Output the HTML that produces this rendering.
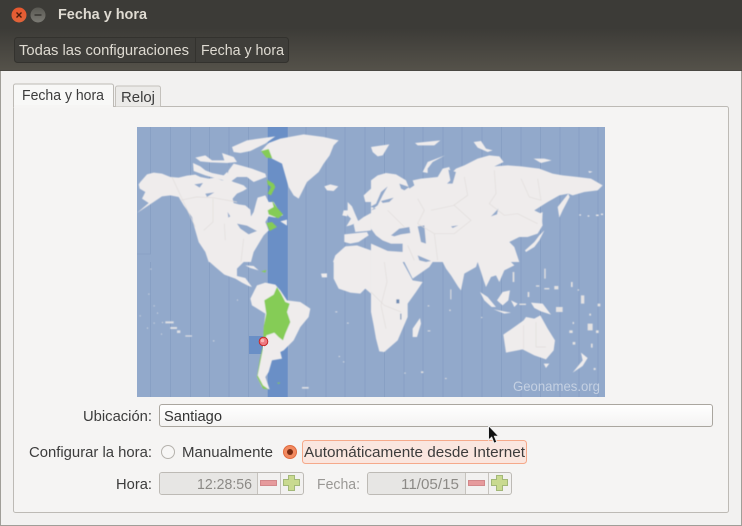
<!DOCTYPE html>
<html><head><meta charset="utf-8"><style>
html,body{margin:0;padding:0;width:742px;height:526px;overflow:hidden;background:#f2f1f0}
svg{display:block}
text{font-family:"Liberation Sans",sans-serif;font-size:14.5px;fill:#3c3c3c}
.land{fill:#efecec}
.b{stroke:#e0dcda;stroke-width:2;fill:none}
.w{fill:#92a9cb}
.g{fill:#85cc56}
</style></head><body>
<svg width="742" height="526" viewBox="0 0 742 526" xmlns="http://www.w3.org/2000/svg">
<defs>
<linearGradient id="tb" x1="0" y1="0" x2="0" y2="1"><stop offset="0" stop-color="#3c3b37"/><stop offset=".4" stop-color="#3c3b37"/><stop offset="1" stop-color="#55524a"/></linearGradient>
<linearGradient id="cl" x1="0" y1="0" x2="0" y2="1"><stop offset="0" stop-color="#e8572e"/><stop offset="1" stop-color="#e0643a"/></linearGradient>
<linearGradient id="mn" x1="0" y1="0" x2="0" y2="1"><stop offset="0" stop-color="#5a5953"/><stop offset="1" stop-color="#7b7a74"/></linearGradient>
<linearGradient id="en" x1="0" y1="0" x2="0" y2="1"><stop offset="0" stop-color="#fff"/><stop offset="1" stop-color="#f4f3f2"/></linearGradient>
<filter id="bl" x="-2%" y="-2%" width="104%" height="104%"><feGaussianBlur stdDeviation=".4"/></filter>
</defs>

<rect width="742" height="526" fill="#f2f1f0"/>
<rect width="742" height="71" fill="url(#tb)"/>
<rect x="0" y="70" width="742" height="1" fill="#4a4842"/>
<rect x="0" y="71" width="1" height="455" fill="#a09e98"/>
<rect x="741" y="71" width="1" height="455" fill="#a09e98"/>
<rect x="0" y="525" width="742" height="1" fill="#a09e98"/>

<circle cx="19" cy="15" r="7.500" fill="url(#cl)"/>
<path d="M16.500 12.500l5 5M21.500 12.500l-5 5" stroke="#4a1c0c" stroke-width="1.400"/>
<circle cx="38" cy="15" r="7.500" fill="url(#mn)"/>
<path d="M34.500 15h7" stroke="#33322e" stroke-width="1.400"/>
<text x="58" y="19" textLength="89" lengthAdjust="spacingAndGlyphs" style="fill:#dfdbd2;font-weight:bold">Fecha y hora</text>

<rect x="14.500" y="37.500" width="274" height="25" rx="3" fill="#3f3e3a" stroke="#33322e"/>
<rect x="195" y="38" width="1" height="24" fill="#33322e"/>
<text x="19" y="55" textLength="170" lengthAdjust="spacingAndGlyphs" style="fill:#dfdbd2">Todas las configuraciones</text>
<text x="201" y="55" textLength="83" lengthAdjust="spacingAndGlyphs" style="fill:#dfdbd2">Fecha y hora</text>

<!-- notebook -->
<rect x="13.500" y="106.500" width="715" height="406" rx="2" fill="#f5f4f3" stroke="#bdbab5"/>
<path d="M115.500 106.500V88a2 2 0 0 1 2-2H158.500a2 2 0 0 1 2 2V106.500" fill="#ebeae8" stroke="#c4c1bc"/>
<path d="M13.500 107V86a2 2 0 0 1 2-2H111.500a2 2 0 0 1 2 2V107" fill="#f8f8f7" stroke="#bdbab5"/>
<rect x="14" y="105" width="99" height="3" fill="#f6f5f4"/>
<text x="22" y="100" textLength="82" lengthAdjust="spacingAndGlyphs">Fecha y hora</text>
<text x="121" y="102" textLength="34" lengthAdjust="spacingAndGlyphs">Reloj</text>

<!-- map -->
<svg x="137" y="127" width="468" height="270" viewBox="0 0 468 270">
<rect width="468" height="270" fill="#92a9cb"/>
<g style="stroke:#869ec3;stroke-width:.8;fill:none">
<path d="M13.500 0V127H0M33.500 0V270M53.500 0V270M72.500 0V270M92 0V270M111.500 0V270M169 0V270M189 0V270M208 0V270M228 0V270M247.500 0V270M267 0V270M286 0V270M306 0V270M325 0V270M345 0V270M364.500 0V270M384 0V270M403.500 0V270M423 0V270M442 0V270M461 0V270M13.500 135V270"/>
</g>
<rect x="130.700" width="20" height="270" fill="#6a8fc6"/>
<rect x="112" y="209" width="19" height="18" fill="#6a8fc6"/>
<g filter="url(#bl)">
<!-- Q1 -->
<g transform="scale(.3333)">
<path class="land" d="M5,172L10,165L30,142L50,137L75,140L100,150L125,152L150,146L175,143L190,150L215,155L235,152L255,160L275,158L290,165L305,170L320,175L330,185L318,192L300,200L287,215L290,228L305,232L325,235L340,248L342,268L350,255L358,225L362,212L385,205L395,225L410,225L425,250L438,265L415,272L395,268L385,285L395,310L380,325L365,350L350,375L342,405L215,405L205,375L185,345L172,300L165,270L140,235L125,210L100,205L75,208L50,225L0,258L35,228L15,215L25,195L8,185Z"/>
<path class="land" d="M168,108L190,118L205,130L225,138L260,145L275,130L290,110L310,115L345,125L385,140L388,150L350,165L330,150L300,150L280,165L240,155L205,145L170,132Z"/>
<path class="land" d="M175,92L205,85L225,100L262,100L255,78L290,90L300,105L270,108L220,106L190,103ZM285,60L330,40L415,28L385,50L340,72L310,78L290,75Z"/>
<path class="land" d="M372,72L395,48L430,35L500,22L560,30L605,40L590,55L578,85L560,110L545,135L510,165L485,215L470,205L455,180L445,145L435,110L405,95Z"/>
<path class="land" d="M562,178L580,172L604,178L590,192L570,190ZM632,225L645,238L655,262L665,285L640,295L628,298L642,275L632,265ZM620,250L635,250L630,268L616,265ZM702,185L680,205L685,225L702,225ZM650,292L680,270L702,258V310L690,312L655,315ZM622,322L690,315L695,325L665,345L640,350L622,345ZM588,405L595,385L625,358L660,355L702,370V405ZM430,283L450,278V296Z"/>
<path class="w" d="M172,172L198,168L188,182ZM205,200L232,196L210,210ZM272,255L280,268L274,272ZM300,290L330,296L360,312L335,322L310,305ZM248,118L258,115L256,138ZM265,118L280,115L272,140Z"/>
<path class="b" d="M105,150L135,215L175,300M228,215V285L200,310M262,290L265,340M320,335L312,405M130,220L178,210L228,212L300,225"/>
<path class="g" d="M372,72L395,66L406,94L388,92ZM390,158L410,170L415,180L402,205L392,200L402,180L392,172ZM405,220L420,242L438,262L424,274L395,262L392,250L410,240ZM388,288L405,285L420,300L398,312Z"/>
</g>
<!-- Q2 -->
<g transform="translate(234,0) scale(.3333)">
<path class="land" d="M0,160L20,145L45,138L75,142L105,160L115,185L130,175L125,160L150,155L200,150L215,125L235,120L240,140L255,125L280,115L320,95L355,85L385,88L398,105L370,118L410,115L450,118L505,125L545,140L575,145L620,150L660,155L695,175L680,190L640,195L605,205L592,200L565,205L530,225L490,250L510,260L515,295L500,320L470,330L445,330L415,345L430,360L445,405H0Z"/>
<path class="land" d="M592,200L596,210L575,250L565,272L560,240ZM462,370L490,345L505,325L520,310L505,340L490,360L465,375ZM505,260L515,255L513,295L508,300Z"/>
<path class="land" d="M0,60L55,52L35,85L20,88L5,75ZM132,48L208,40L190,55L140,55ZM155,135L170,105L222,85L185,105L170,125L170,138ZM308,45L330,42L345,65L365,70L350,75L320,62ZM488,95L520,95L542,100L510,108ZM652,132L665,134L655,138Z"/>
<path class="land" d="M625,262h5v4h-5zM650,265h5v4h-5zM675,263h8v4h-8zM690,260h6v4h-6z"/>
<path class="w" d="M0,250L20,235L35,205L50,178L30,195L15,230L0,238ZM30,222L68,212L55,225L35,228ZM85,170L115,180L100,190L90,185ZM60,325L85,305L115,300L118,318L90,322L70,328ZM140,298L160,295L165,350L150,345L145,320ZM0,305L15,325L35,340L60,350L95,350L95,375L50,372L0,350ZM140,385L180,402L165,405L145,400ZM240,298L262,295L245,303ZM360,268L382,245L378,262ZM232,128L238,160L228,170L245,170L255,135ZM0,250L0,240L15,245Z"/>
<path class="b" d="M50,250L100,300M140,215L160,250L140,290L190,320L250,320L300,280L250,235L180,250M280,150L290,205L248,235M370,130L375,200L355,230L400,265L440,260L500,290M450,155L475,210L510,220L500,155M190,320L200,400M110,355L130,400"/>
</g>
<!-- Q3 -->
<g transform="translate(0,135) scale(.3333)">
<path class="land" d="M218,0H320L300,20L300,42L325,48L345,75L335,72L315,62L295,50L262,38L235,15Z"/>
<path class="land" d="M325,10L350,12L365,25L340,18Z"/>
<path class="land" d="M345,100L360,70L385,62L415,68L430,85L450,115L490,120L520,140L515,165L490,195L470,235L440,265L430,270L435,290L405,295L395,330L385,345L398,382L375,375L360,345L370,290L378,255L380,200L385,155L345,130L340,110Z"/>
<path class="g" d="M420,75L432,95L445,120L458,125L450,150L460,180L445,215L438,235L425,225L412,212L388,220L378,260L368,310L362,340L378,370L395,382L378,380L360,345L368,295L378,250L380,195L388,155L382,115L410,98Z"/>
<path class="g" d="M372,28L388,24L385,32ZM420,362L430,362L425,366Z"/>
<path class="land" d="M590,0H702V95L685,80L670,95L640,92L605,80L590,50Z"/>
<path class="land" d="M552,35L570,34V46L555,46Z"/>
<path fill="#dfe0e4" d="M40,20h3v3h-3zM34,95h3v3h-3zM50,130h3v3h-3zM60,152h3v3h-3zM8,160h3v3h-3zM50,182h3v3h-3zM75,180h3v3h-3zM85,178h25v6h-25zM100,195h20v6h-20zM120,205h10v8h-10zM30,197h3v3h-3zM72,215h3v3h-3zM145,220h20v4h-20zM228,235h4v3h-4zM300,113h3v3h-3zM595,148h6v3h-6zM630,182h5v3h-5zM605,282h4v3h-4zM618,298h4v3h-4zM495,375h20v5h-20z"/>
</g>
<!-- Q4 -->
<g transform="translate(234,135) scale(.3333)">
<path class="land" d="M0,0H95L125,55L155,60L135,90L110,125L110,165L95,200L80,235L40,270L25,268L15,230L8,190L0,150Z"/>
<path class="land" d="M100,0H185L175,15L125,50ZM215,0H320L315,15L280,35L270,85L262,75L240,40L225,20ZM320,0H420L430,10L400,25L385,60L375,40L360,45L345,75L338,55L330,30Z"/>
<path class="land" d="M125,225L125,200L147,168L150,185L138,225ZM397,218L430,195L458,175L465,165L490,170L508,160L530,200L552,235L548,265L525,292L490,280L455,262L405,272ZM518,305L535,305L525,318ZM605,332L635,295L630,272L650,288L635,312Z"/>
<path class="land" d="M378,115L395,90L417,85L412,115L395,130ZM327,90L350,105L375,135L362,135L340,115ZM368,142L420,152L400,155ZM420,115L440,125L430,135L425,125ZM480,122L515,125L540,158L510,148L490,138Z"/>
<path fill="#e4e2e2" d="M238,82h3v30h-3zM170,130h5v3h-5zM235,143h4v4h-4zM330,165h4v3h-4zM170,205h8v3h-8zM100,332h4v3h-4zM150,328h7v5h-7zM222,348h5v3h-5zM520,20h4v30h-4zM425,30h5v30h-5zM495,70h10v4h-10zM520,78h15v4h-15zM550,72h12v10h-12zM600,60h5v15h-5zM620,82h4v4h-4zM630,100h10v25h-10zM680,125h8v8h-8zM655,155h5v6h-5zM650,185h15v20h-15zM605,180h4v6h-4zM595,205h10v8h-10zM605,240h8v8h-8zM660,245h5v12h-5zM668,318h6v6h-6zM470,90h5v15h-5zM445,125h20v4h-20zM555,135h20v15h-20zM675,205h8v8h-8z"/>
<path d="M76,112h9v12h-9zM88,155h3v18h-3z" fill="#6d8ab3"/>
<path class="b" d="M40,0L48,60L30,130L45,200M0,90L40,130L90,150M458,190V260M495,180V255L525,255"/>
</g>
</g>
<text x="376" y="264" textLength="87" lengthAdjust="spacingAndGlyphs" style="fill:#c4d0e2;font-size:14px">Geonames.org</text>
<circle cx="126.500" cy="214.500" r="4.300" fill="#ee7a80" stroke="#c62828" stroke-width="1"/>
<circle cx="125.500" cy="213.500" r="1.800" fill="#f8b5b5"/>
<rect x="126" y="219" width="1" height="4" fill="#eee"/>
</svg>

<!-- form -->
<text x="83" y="421" textLength="69" lengthAdjust="spacingAndGlyphs">Ubicación:</text>
<rect x="159.500" y="404.500" width="553" height="22" rx="2.500" fill="url(#en)" stroke="#aaa69f"/>
<text x="164" y="421" textLength="58" lengthAdjust="spacingAndGlyphs" style="fill:#333">Santiago</text>

<text x="29" y="457" textLength="123" lengthAdjust="spacingAndGlyphs">Configurar la hora:</text>
<circle cx="168" cy="452" r="6.500" fill="#f7f6f5" stroke="#b5b2ad"/>
<text x="182" y="457" textLength="91" lengthAdjust="spacingAndGlyphs">Manualmente</text>
<circle cx="290" cy="452" r="6.500" fill="#f28a60" stroke="#e06b3f"/>
<circle cx="290" cy="452" r="3" fill="#7a2c12"/>
<rect x="302.500" y="440.500" width="224" height="23" rx="3" fill="#fae6df" stroke="#f5a98a"/>
<text x="304" y="457" textLength="221" lengthAdjust="spacingAndGlyphs">Automáticamente desde Internet</text>

<text x="116" y="489" textLength="36" lengthAdjust="spacingAndGlyphs">Hora:</text>
<rect x="159.500" y="472.500" width="144" height="22" rx="2.500" fill="#f2f1f0" stroke="#bdbab5"/>
<path d="M162 473H258V494H162a2 2 0 0 1-2-2V475a2 2 0 0 1 2-2Z" fill="#e7e6e4"/>
<path d="M257.500 473V494M280.500 473V494" stroke="#c6c3be"/>
<text x="197" y="489" textLength="55" lengthAdjust="spacingAndGlyphs" style="fill:#8c8a86">12:28:56</text>
<rect x="260.500" y="480.500" width="16" height="5" fill="#e69a9c" stroke="#d2878a"/>
<path d="M288.500 475.500h6v4h5v6h-5v5h-6v-5h-5v-6h5z" fill="#c9da90" stroke="#a3b878"/>

<text x="317" y="489" textLength="43" lengthAdjust="spacingAndGlyphs" style="fill:#9a9895">Fecha:</text>
<rect x="367.500" y="472.500" width="144" height="22" rx="2.500" fill="#f2f1f0" stroke="#bdbab5"/>
<path d="M370 473H465V494H370a2 2 0 0 1-2-2V475a2 2 0 0 1 2-2Z" fill="#e7e6e4"/>
<path d="M465.500 473V494M488.500 473V494" stroke="#c6c3be"/>
<text x="401" y="489" textLength="58" lengthAdjust="spacingAndGlyphs" style="fill:#8c8a86">11/05/15</text>
<rect x="468.500" y="480.500" width="16" height="5" fill="#e69a9c" stroke="#d2878a"/>
<path d="M496.500 475.500h6v4h5v6h-5v5h-6v-5h-5v-6h5z" fill="#c9da90" stroke="#a3b878"/>

<!-- cursor -->
<path d="M488.500 425.500V440l3.200-2.800 2.300 6 2.800-1.100-2.400-5.800h4.400Z" fill="#111" stroke="#eee" stroke-width="1"/>
</svg>
</body></html>
